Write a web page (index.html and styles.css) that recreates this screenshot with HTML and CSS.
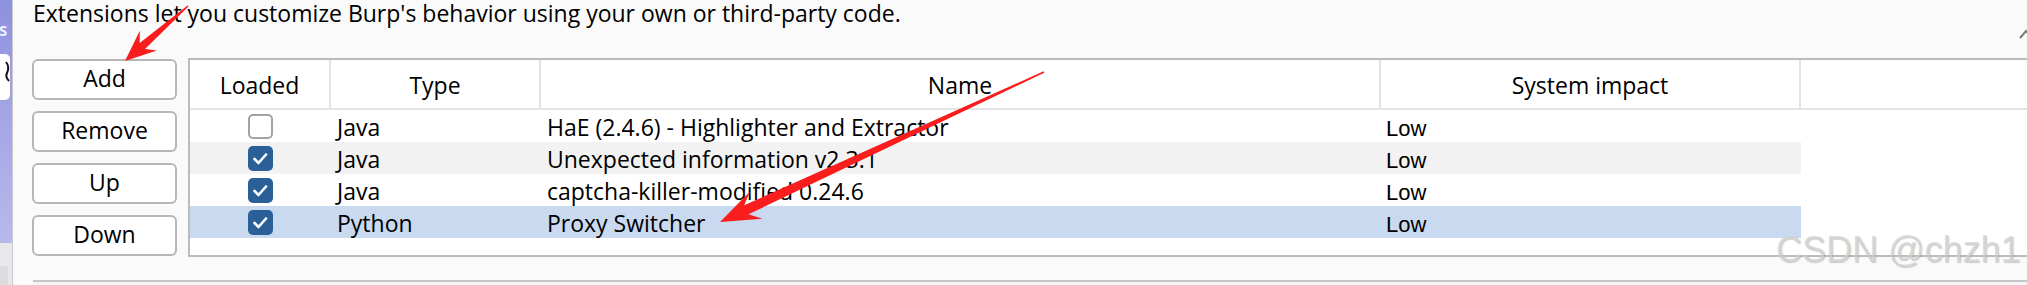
FILE: index.html
```html
<!DOCTYPE html>
<html>
<head>
<meta charset="utf-8">
<link rel="stylesheet" href="styles.css">
</head>
<body>
<div class="screen">
  <div class="dock">
    <svg class="dock-art" width="12" height="285" viewBox="0 0 12 285">
      <text x="-1" y="36" class="dock-label">S</text>
      <rect x="-5" y="54" width="15" height="46" rx="5" fill="#ffffff"/>
      <path d="M6 62 q4 5 1 11 q-2 4 2 8" fill="none" stroke="#111" stroke-width="2"/>
      <rect x="0" y="243" width="12" height="42" fill="#e8e8ea"/>
      <rect x="-3" y="266" width="11" height="22" rx="3" fill="#dcdcde"/>
    </svg>
  </div>
  <div class="panel">
    <div class="intro">
      <span class="intro-text">Extensions let you customize Burp's behavior using your own or third-party code.</span>
      <svg class="chev" width="14" height="12" viewBox="0 0 14 12"><polyline points="1,10 7,3 13,10" fill="none" stroke="#7a7a7a" stroke-width="2"/></svg>
    </div>
    <div class="main">
      <div class="buttons">
        <div class="btn">Add</div>
        <div class="btn">Remove</div>
        <div class="btn">Up</div>
        <div class="btn">Down</div>
      </div>
      <div class="table">
        <div class="thead">
          <div class="th">Loaded</div>
          <div class="th">Type</div>
          <div class="th">Name</div>
          <div class="th">System impact</div>
          <div class="th last"></div>
        </div>
        <div class="row">
          <div class="cell chk"><span class="box"></span></div>
          <div class="cell">Java</div>
          <div class="cell">HaE (2.4.6) - Highlighter and Extractor</div>
          <div class="cell impact">Low</div>
        </div>
        <div class="row alt">
          <div class="cell chk"><span class="box on"><svg width="25" height="25" viewBox="0 0 25 25"><polyline points="6.5,13 10.5,17 18,8.5" fill="none" stroke="#fff" stroke-width="2.6" stroke-linecap="round" stroke-linejoin="round"/></svg></span></div>
          <div class="cell">Java</div>
          <div class="cell">Unexpected information v2.3.1</div>
          <div class="cell impact">Low</div>
        </div>
        <div class="row">
          <div class="cell chk"><span class="box on"><svg width="25" height="25" viewBox="0 0 25 25"><polyline points="6.5,13 10.5,17 18,8.5" fill="none" stroke="#fff" stroke-width="2.6" stroke-linecap="round" stroke-linejoin="round"/></svg></span></div>
          <div class="cell">Java</div>
          <div class="cell">captcha-killer-modified 0.24.6</div>
          <div class="cell impact">Low</div>
        </div>
        <div class="row sel">
          <div class="cell chk"><span class="box on"><svg width="25" height="25" viewBox="0 0 25 25"><polyline points="6.5,13 10.5,17 18,8.5" fill="none" stroke="#fff" stroke-width="2.6" stroke-linecap="round" stroke-linejoin="round"/></svg></span></div>
          <div class="cell">Python</div>
          <div class="cell">Proxy Switcher</div>
          <div class="cell impact">Low</div>
        </div>
      </div>
    </div>
    <div class="footer"></div>
  </div>
  <svg class="annot" width="2027" height="285" viewBox="0 0 2027 285">
    <polygon points="188.46,6.53 145.0,48.9 156.9,50.4 125,61 139.8,30.8 139.7,42.9 187.54,5.47" fill="#f91d1d"/>
    <polygon points="1044.34,72.73 748.4,214.35 762.6,218.8 720,222 750.0,191.6 744.2,205.27 1043.66,71.27" fill="#f91d1d"/>
  </svg>
  <div class="watermark">CSDN @chzh1</div>
</div>
</body>
</html>
```

FILE: styles.css
```css
html, body {
  margin: 0;
  padding: 0;
}
body {
  width: 2027px;
  height: 285px;
  overflow: hidden;
  background: #fafafa;
  font-family: "Open Sans", "Noto Sans", sans-serif;
  color: #000;
}
.screen {
  position: relative;
  display: flex;
  width: 2027px;
  height: 285px;
  overflow: hidden;
}
.dock {
  flex: none;
  width: 12px;
  height: 285px;
  border-right: 1px solid #c8c8ce;
  background: linear-gradient(to bottom, #8d92de 0, #a5a6e6 120px, #b9b8ec 243px, #e8e8ea 243px);
}
.dock-art {
  display: block;
}
.dock-label {
  font-family: "Open Sans", sans-serif;
  font-size: 15px;
  font-weight: 700;
  fill: #eef0ff;
}
.panel {
  flex: 1;
  min-width: 0;
  display: flex;
  flex-direction: column;
  padding-left: 19px;
}
.intro {
  display: flex;
  align-items: flex-start;
  height: 26px;
  margin-bottom: 32px;
  font-size: 23px;
  line-height: 26px;
  white-space: nowrap;
}
.intro-text {
  padding-left: 1px;
}
.chev {
  flex: none;
  margin-left: auto;
  margin-top: 28px;
  margin-right: -6px;
}
.main {
  display: flex;
  gap: 11px;
  height: 199px;
}
.buttons {
  flex: none;
  width: 145px;
  display: flex;
  flex-direction: column;
  gap: 11px;
  padding-top: 1px;
}
.btn {
  box-sizing: border-box;
  height: 41px;
  border: 2px solid #bab6b6;
  border-radius: 6px;
  background: #fff;
  font-size: 23px;
  line-height: 28px;
  display: flex;
  align-items: center;
  justify-content: center;
  padding-bottom: 3px;
}
.table {
  flex: 1;
  box-sizing: border-box;
  height: 199px;
  margin-right: -30px;
  border: 2px solid #bcbcbc;
  background: #fff;
}
.thead {
  box-sizing: border-box;
  display: grid;
  grid-template-columns: 141px 210px 840px 420px 1fr;
  height: 50px;
  border-bottom: 2px solid #e4e4e4;
}
.th {
  box-sizing: border-box;
  border-right: 2px solid #e4e4e4;
  display: flex;
  align-items: center;
  justify-content: center;
  font-size: 23px;
  line-height: 28px;
  padding-top: 2px;
}
.th.last {
  border-right: none;
}
.row {
  display: grid;
  grid-template-columns: 141px 210px 840px 420px;
  width: 1611px;
  height: 32px;
}
.row.alt {
  background: #f2f2f2;
}
.row.sel {
  background: #c9daf0;
}
.cell {
  box-sizing: border-box;
  height: 32px;
  padding: 4px 0 0 6px;
  font-size: 23px;
  line-height: 27px;
  white-space: nowrap;
}
.cell.chk {
  padding: 0;
  display: flex;
  align-items: center;
  justify-content: center;
}
.cell.impact {
  font-family: "Liberation Sans", Arial, sans-serif;
  font-size: 22px;
  padding: 5px 0 0 5px;
}
.box {
  box-sizing: border-box;
  width: 25px;
  height: 25px;
  border: 2px solid #a3a3a3;
  border-radius: 5px;
  background: #fff;
}
.box.on {
  border: none;
  background: #2b5f98;
}
.box svg {
  display: block;
}
.footer {
  margin-top: 23px;
  margin-left: 1px;
  height: 3px;
  border-top: 2px solid #c6c6c6;
  background: #f4f4f4;
}
.annot {
  position: absolute;
  left: 0;
  top: 0;
  pointer-events: none;
}
.watermark {
  position: absolute;
  left: 1776px;
  top: 232px;
  font-family: "Liberation Sans", Arial, sans-serif;
  font-size: 36px;
  line-height: 36px;
  white-space: nowrap;
  color: rgba(212, 212, 212, 0.72);
  text-shadow: 1px 1px 1px rgba(120, 120, 120, 0.35);
  pointer-events: none;
}
```
